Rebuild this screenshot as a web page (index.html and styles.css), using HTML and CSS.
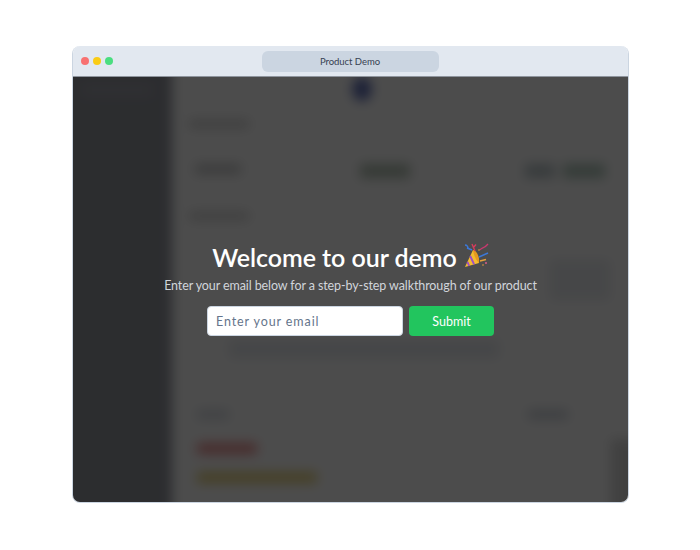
FILE: index.html
```html
<!DOCTYPE html>
<html lang="en">
<head>
<meta charset="utf-8">
<title>Product Demo</title>
<link rel="stylesheet" href="styles.css">
</head>
<body>
<div class="window">
  <header class="titlebar">
    <div class="dots"><span class="dot red"></span><span class="dot yellow"></span><span class="dot green"></span></div>
    <div class="address">Product Demo</div>
  </header>
  <div class="stage">
    <div class="dash" aria-hidden="true">
      <aside class="side"><div class="side-logo"></div></aside>
      <div class="main">
        <div class="topbar"><div class="avatar"></div></div>
        <div class="blob heading"></div>
        <div class="cards">
          <div class="card"><div class="blob c1"></div></div>
          <div class="card"><div class="blob c2"></div></div>
          <div class="card"><div class="blob c3a"></div><div class="blob c3b"></div></div>
        </div>
        <div class="blob heading2"></div>
        <div class="mid">
          <div class="blob wide"></div>
          <div class="blob chart"></div>
        </div>
        <div class="lower">
          <div class="col-a">
            <div class="blob label"></div>
            <div class="blob redbar"></div>
            <div class="blob yellowbar"></div>
          </div>
          <div class="col-b">
            <div class="blob label2"></div>
            <div class="blob darkside"></div>
          </div>
        </div>
      </div>
    </div>
    <div class="overlay">
      <h1 class="title">Welcome to our demo
        <svg class="popper" viewBox="0 0 26 26" width="26" height="26" role="img" aria-label="party popper">
          <path d="M2 24 L10 7 C13 8 16 14 16 20 Z" fill="#f3bb2f"/>
          <path d="M10 7 C12.500 6.500 17 13 16 20 C13.500 18 10.500 12 10 7 Z" fill="#e59a1f"/>
          <path d="M4.400 18.900 L6.200 22.800 M7.200 13 L11.100 21.400" fill="none" stroke="#9d4fc4" stroke-width="1.900"/>
          <path d="M2 2 C4 2 5 4 5 5 M4 5 L9 7" fill="none" stroke="#3b78d8" stroke-width="1.600"/>
          <path d="M9 1 L12 8 M13 1.500 L10 5" fill="none" stroke="#d43c5c" stroke-width="1.400"/>
          <path d="M17 7 C19 4 21 6 25 1" fill="none" stroke="#c8396e" stroke-width="1.300"/>
          <path d="M16 14 L25 10" fill="none" stroke="#3b78d8" stroke-width="1.500"/>
          <path d="M17 18 L23 16.500" fill="none" stroke="#e9a23b" stroke-width="1.300"/>
          <circle cx="23" cy="20" r="1" fill="#d85a8a"/><circle cx="20" cy="22" r=".8" fill="#e9a23b"/><circle cx="16" cy="7" r=".8" fill="#e9a23b"/>
        </svg>
      </h1>
      <p class="subtitle">Enter your email below for a step-by-step walkthrough of our product</p>
      <form class="form">
        <input class="email" type="email" placeholder="Enter your email">
        <button class="submit" type="button">Submit</button>
      </form>
    </div>
  </div>
</div>
</body>
</html>
```

FILE: styles.css
```css
* { box-sizing: border-box; }
html, body { margin: 0; height: 100%; background: #fff; }
body { padding: 46px 71px 47px 72px; font-family: "Lato", "Liberation Sans", sans-serif; }
.window {
  height: 457px;
  display: flex;
  flex-direction: column;
  border: 1px solid #cbd5e1;
  border-top: 0;
  border-radius: 8px;
  overflow: hidden;
  background: #fff;
}
.titlebar {
  position: relative;
  flex: none;
  height: 31px;
  display: flex;
  align-items: center;
  justify-content: center;
  background: #e2e8f0;
  border-bottom: 1px solid #8f959e;
}
.dots { position: absolute; left: 8px; top: 11px; display: flex; gap: 4px; }
.dot { width: 8px; height: 8px; border-radius: 50%; }
.red { background: #f87171; }
.yellow { background: #facc15; }
.green { background: #4ade80; }
.address {
  width: 177px;
  height: 21px;
  margin: 0 0 0 -1px;
  display: flex;
  align-items: center;
  justify-content: center;
  border-radius: 6px;
  background: #cbd5e1;
  color: #374151;
  font-size: 9.5px;
  letter-spacing: -.05px;
}
.stage { position: relative; flex: 1; overflow: hidden; background: #fff; }
.dash {
  display: flex;
  height: calc(100% + 30px);
  margin: -15px;
  filter: blur(6px);
}
.side { flex: none; width: 114px; padding: 23px 0 0 24px; background: #94969f; }
.side-logo { width: 70px; height: 10px; background: #a2a4ac; }
.main { flex: 1; min-width: 0; padding: 15px 15px 0 17px; background: #fff; }
.topbar { height: 35px; padding: 0 0 0 163px; }
.avatar { width: 20px; height: 24px; border-radius: 50%; background: #6070b8; }
.blob { border-radius: 2px; }
.heading { width: 60px; height: 8px; margin-top: 8px; background: #d0d0d0; }
.cards { display: flex; margin-top: 24px; height: 36px; }
.card { flex: none; width: 165px; padding: 12px 0 0 6px; display: flex; gap: 8px; }
.c1 { width: 46px; height: 10px; background: #c8c9ca; }
.c2 { width: 50px; height: 14px; background: #b4c2b4; }
.c3a { width: 30px; height: 14px; background: #bcc8cc; }
.c3b { width: 42px; height: 14px; background: #b0c8bc; }
.heading2 { width: 60px; height: 8px; margin-top: 24px; background: #d2d2d2; }
.mid { height: 190px; padding: 40px 0 0 40px; display: flex; justify-content: space-between; }
.wide { width: 270px; height: 18px; margin-top: 80px; background: #e9ecf1; }
.chart { width: 60px; height: 40px; margin-right: 18px; background: #eceef2; }
.lower { display: flex; justify-content: space-between; }
.col-a { width: 300px; }
.label { width: 32px; height: 9px; margin: 0 0 0 8px; background: #d6dbe3; }
.redbar { width: 60px; height: 11px; margin: 24px 0 0 8px; border-radius: 3px; background: #f09090; }
.yellowbar { width: 120px; height: 11px; margin: 18px 0 0 8px; border-radius: 3px; background: #e8d47c; }
.col-b { width: 100px; }
.label2 { width: 40px; height: 9px; background: #ccd1da; }
.darkside { width: 34px; height: 100px; margin: 20px 0 0 83px; background: #d8d8d8; }
.overlay {
  position: absolute;
  inset: 0;
  display: flex;
  flex-direction: column;
  align-items: center;
  justify-content: center;
  background: rgba(0, 0, 0, .7);
  color: #fff;
}
.title {
  display: flex;
  align-items: center;
  gap: 6px;
  margin: 0;
  font-size: 25px;
  line-height: 28px;
  font-weight: 600;
  letter-spacing: -.05px;
}
.popper { flex: none; margin: -2px 0 0 0; }
.subtitle { margin: 7px 0 0; font-size: 12.5px; line-height: 16px; color: #d1d5db; letter-spacing: -.1px; }
.form { display: flex; gap: 6px; margin-top: 12px; }
.email {
  width: 196px;
  height: 30px;
  padding: 0 8px;
  border: 1px solid #cbd5e1;
  border-radius: 4px;
  background: #fff;
  font: 12.5px "Lato", "Liberation Sans", sans-serif;
  letter-spacing: .9px;
  outline: none;
}
.email::placeholder { color: #64748b; opacity: 1; }
.submit {
  width: 85px;
  height: 30px;
  border: 0;
  border-radius: 4px;
  background: #22c55e;
  color: #fff;
  font: 12.5px "Lato", "Liberation Sans", sans-serif;
}
```
